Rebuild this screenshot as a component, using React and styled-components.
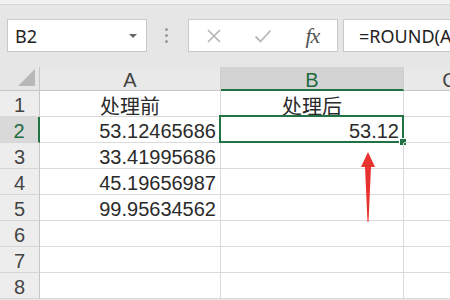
import React from 'react';
import styled, { createGlobalStyle } from 'styled-components';

const Global = createGlobalStyle`
  html, body { margin: 0; padding: 0; background: #e6e6e6; }
  * { box-sizing: border-box; }
`;

const Screen = styled.div`
  width: 450px;
  height: 300px;
  overflow: hidden;
  position: relative;
  background: #e6e6e6;
  font-family: "Liberation Sans", "Noto Sans CJK SC", sans-serif;
`;

const TopStrip = styled.div`
  height: 5px;
  background: #f1f1f1;
  border-bottom: 1px solid #d8d8d8;
`;

const FormulaBar = styled.div`
  display: flex;
  align-items: center;
  height: 62px;
  padding: 14px 0 15px 7px;
  background: #e6e6e6;
`;

const Box = styled.div`
  height: 33px;
  background: #fff;
  border: 1px solid #c9c9c9;
  display: flex;
  align-items: center;
  flex: ${p => (p.grow ? '1' : 'none')};
  width: ${p => (p.w ? `${p.w}px` : 'auto')};
  margin-left: ${p => p.ml || 0}px;
  margin-right: ${p => (p.grow ? -20 : 0)}px;
  overflow: hidden;
`;

const NameText = styled.span`
  font-family: "Noto Sans", "Noto Sans CJK SC", sans-serif;
  font-size: 18px;
  color: #222;
  padding-left: 7px;
  flex: 1;
`;

const Caret = styled.span`
  width: 0;
  height: 0;
  border-left: 4px solid transparent;
  border-right: 4px solid transparent;
  border-top: 4px solid #666;
  margin-right: 9px;
`;

const Dots = styled.div`
  display: flex;
  flex-direction: column;
  gap: 3px;
  margin-left: 18px;
  span {
    width: 3px;
    height: 3px;
    border-radius: 50%;
    background: #9a9a9a;
  }
`;

const IconSlot = styled.div`
  flex: 1;
  display: flex;
  align-items: center;
  justify-content: center;
`;

const Fx = styled.span`
  font-family: "Liberation Serif", serif;
  font-style: italic;
  font-size: 22px;
  color: #555;
  letter-spacing: -1px;
`;

const FormulaText = styled.span`
  font-family: "Noto Sans", "Noto Sans CJK SC", sans-serif;
  font-size: 18px;
  color: #222;
  padding-left: 15px;
  white-space: nowrap;
`;

const Sheet = styled.div`
  display: grid;
  grid-template-columns: 40px 181px 183px 92px;
  grid-template-rows: 24px repeat(8, 26px);
  background: #fff;
  position: relative;
  width: 496px;
`;

const Corner = styled.div`
  background: #e6e6e6;
  border-right: 1px solid #c6c6c6;
  border-bottom: 1px solid #c6c6c6;
  position: relative;
  overflow: hidden;
  &::after {
    content: '';
    position: absolute;
    right: 4px;
    bottom: 4px;
    width: 0;
    height: 0;
    border-left: 17px solid transparent;
    border-bottom: 17px solid #b8b8b8;
  }
`;

const ColHead = styled.div`
  background: ${p => (p.active ? '#d3d3d3' : '#e9e9e9')};
  border-right: 1px solid #cfcfcf;
  border-bottom: ${p => (p.active ? '2px solid #217346' : '1px solid #c6c6c6')};
  color: ${p => (p.active ? '#1e6b40' : '#444')};
  font-size: 20px;
  display: flex;
  align-items: center;
  justify-content: center;
  padding-top: ${p => (p.active ? 4 : 3)}px;
`;

const RowHead = styled.div`
  background: ${p => (p.active ? '#d9d9d9' : '#ededed')};
  border-right: ${p => (p.active ? '2px solid #217346' : '1px solid #c6c6c6')};
  border-bottom: 1px solid #d6d6d6;
  color: ${p => (p.active ? '#1e6b40' : '#444')};
  font-size: 20px;
  display: flex;
  align-items: center;
  justify-content: center;
  padding-top: 3px;
`;

const Cell = styled.div`
  border-right: 1px solid #dadada;
  border-bottom: 1px solid #dadada;
  font-size: 20px;
  color: #2a2a2a;
  display: flex;
  align-items: center;
  justify-content: ${p => (p.align === 'center' ? 'center' : 'flex-end')};
  padding: 3px 4px 0 ${p => (p.align === 'center' ? 4 : 0)}px;
  white-space: nowrap;
  position: relative;
  ${p =>
    p.selected &&
    `
    &::before {
      content: '';
      position: absolute;
      left: -2px;
      top: -2px;
      right: -1px;
      bottom: -1px;
      border: 2px solid #217346;
      pointer-events: none;
    }
    &::after {
      content: '';
      position: absolute;
      right: -4px;
      bottom: -4px;
      width: 6px;
      height: 6px;
      background: #217346;
      border: 1px solid #fff;
    }
  `}
`;

const Arrow = styled.svg`
  position: absolute;
  left: 358px;
  top: 85px;
`;

const rows = [
  ['处理前', '处理后'],
  ['53.12465686', '53.12'],
  ['33.41995686', ''],
  ['45.19656987', ''],
  ['99.95634562', ''],
  ['', ''],
  ['', ''],
  ['', ''],
];

const App = () => (
  <Screen>
    <Global />
    <TopStrip />
    <FormulaBar>
      <Box w={140}>
        <NameText>B2</NameText>
        <Caret />
      </Box>
      <Dots>
        <span />
        <span />
        <span />
      </Dots>
      <Box w={150} ml={20}>
        <IconSlot>
          <svg width="16" height="16" viewBox="0 0 16 16">
            <path d="M2 2 L14 14 M14 2 L2 14" stroke="#b3b3b3" strokeWidth="1.6" fill="none" />
          </svg>
        </IconSlot>
        <IconSlot>
          <svg width="18" height="14" viewBox="0 0 18 14">
            <path d="M1.5 7.5 L6.5 12.5 L16.5 1.5" stroke="#b8b8b8" strokeWidth="1.8" fill="none" />
          </svg>
        </IconSlot>
        <IconSlot>
          <Fx>fx</Fx>
        </IconSlot>
      </Box>
      <Box grow ml={5}>
        <FormulaText>=ROUND(A</FormulaText>
      </Box>
    </FormulaBar>
    <Sheet>
      <Corner />
      <ColHead>A</ColHead>
      <ColHead active>B</ColHead>
      <ColHead>C</ColHead>
      {rows.map((r, i) => (
        <React.Fragment key={i}>
          <RowHead active={i === 1}>{i + 1}</RowHead>
          <Cell align={i === 0 ? 'center' : 'right'}>{r[0]}</Cell>
          <Cell align={i === 0 ? 'center' : 'right'} selected={i === 1}>{r[1]}</Cell>
          <Cell />
        </React.Fragment>
      ))}
      <Arrow width="22" height="72" viewBox="0 0 22 72">
        <path d="M10 0 L17 15 L13 15 L10.5 70 L9.5 70 L7 15 L3 15 Z" fill="#e8322f" />
      </Arrow>
    </Sheet>
  </Screen>
);

export default App;
